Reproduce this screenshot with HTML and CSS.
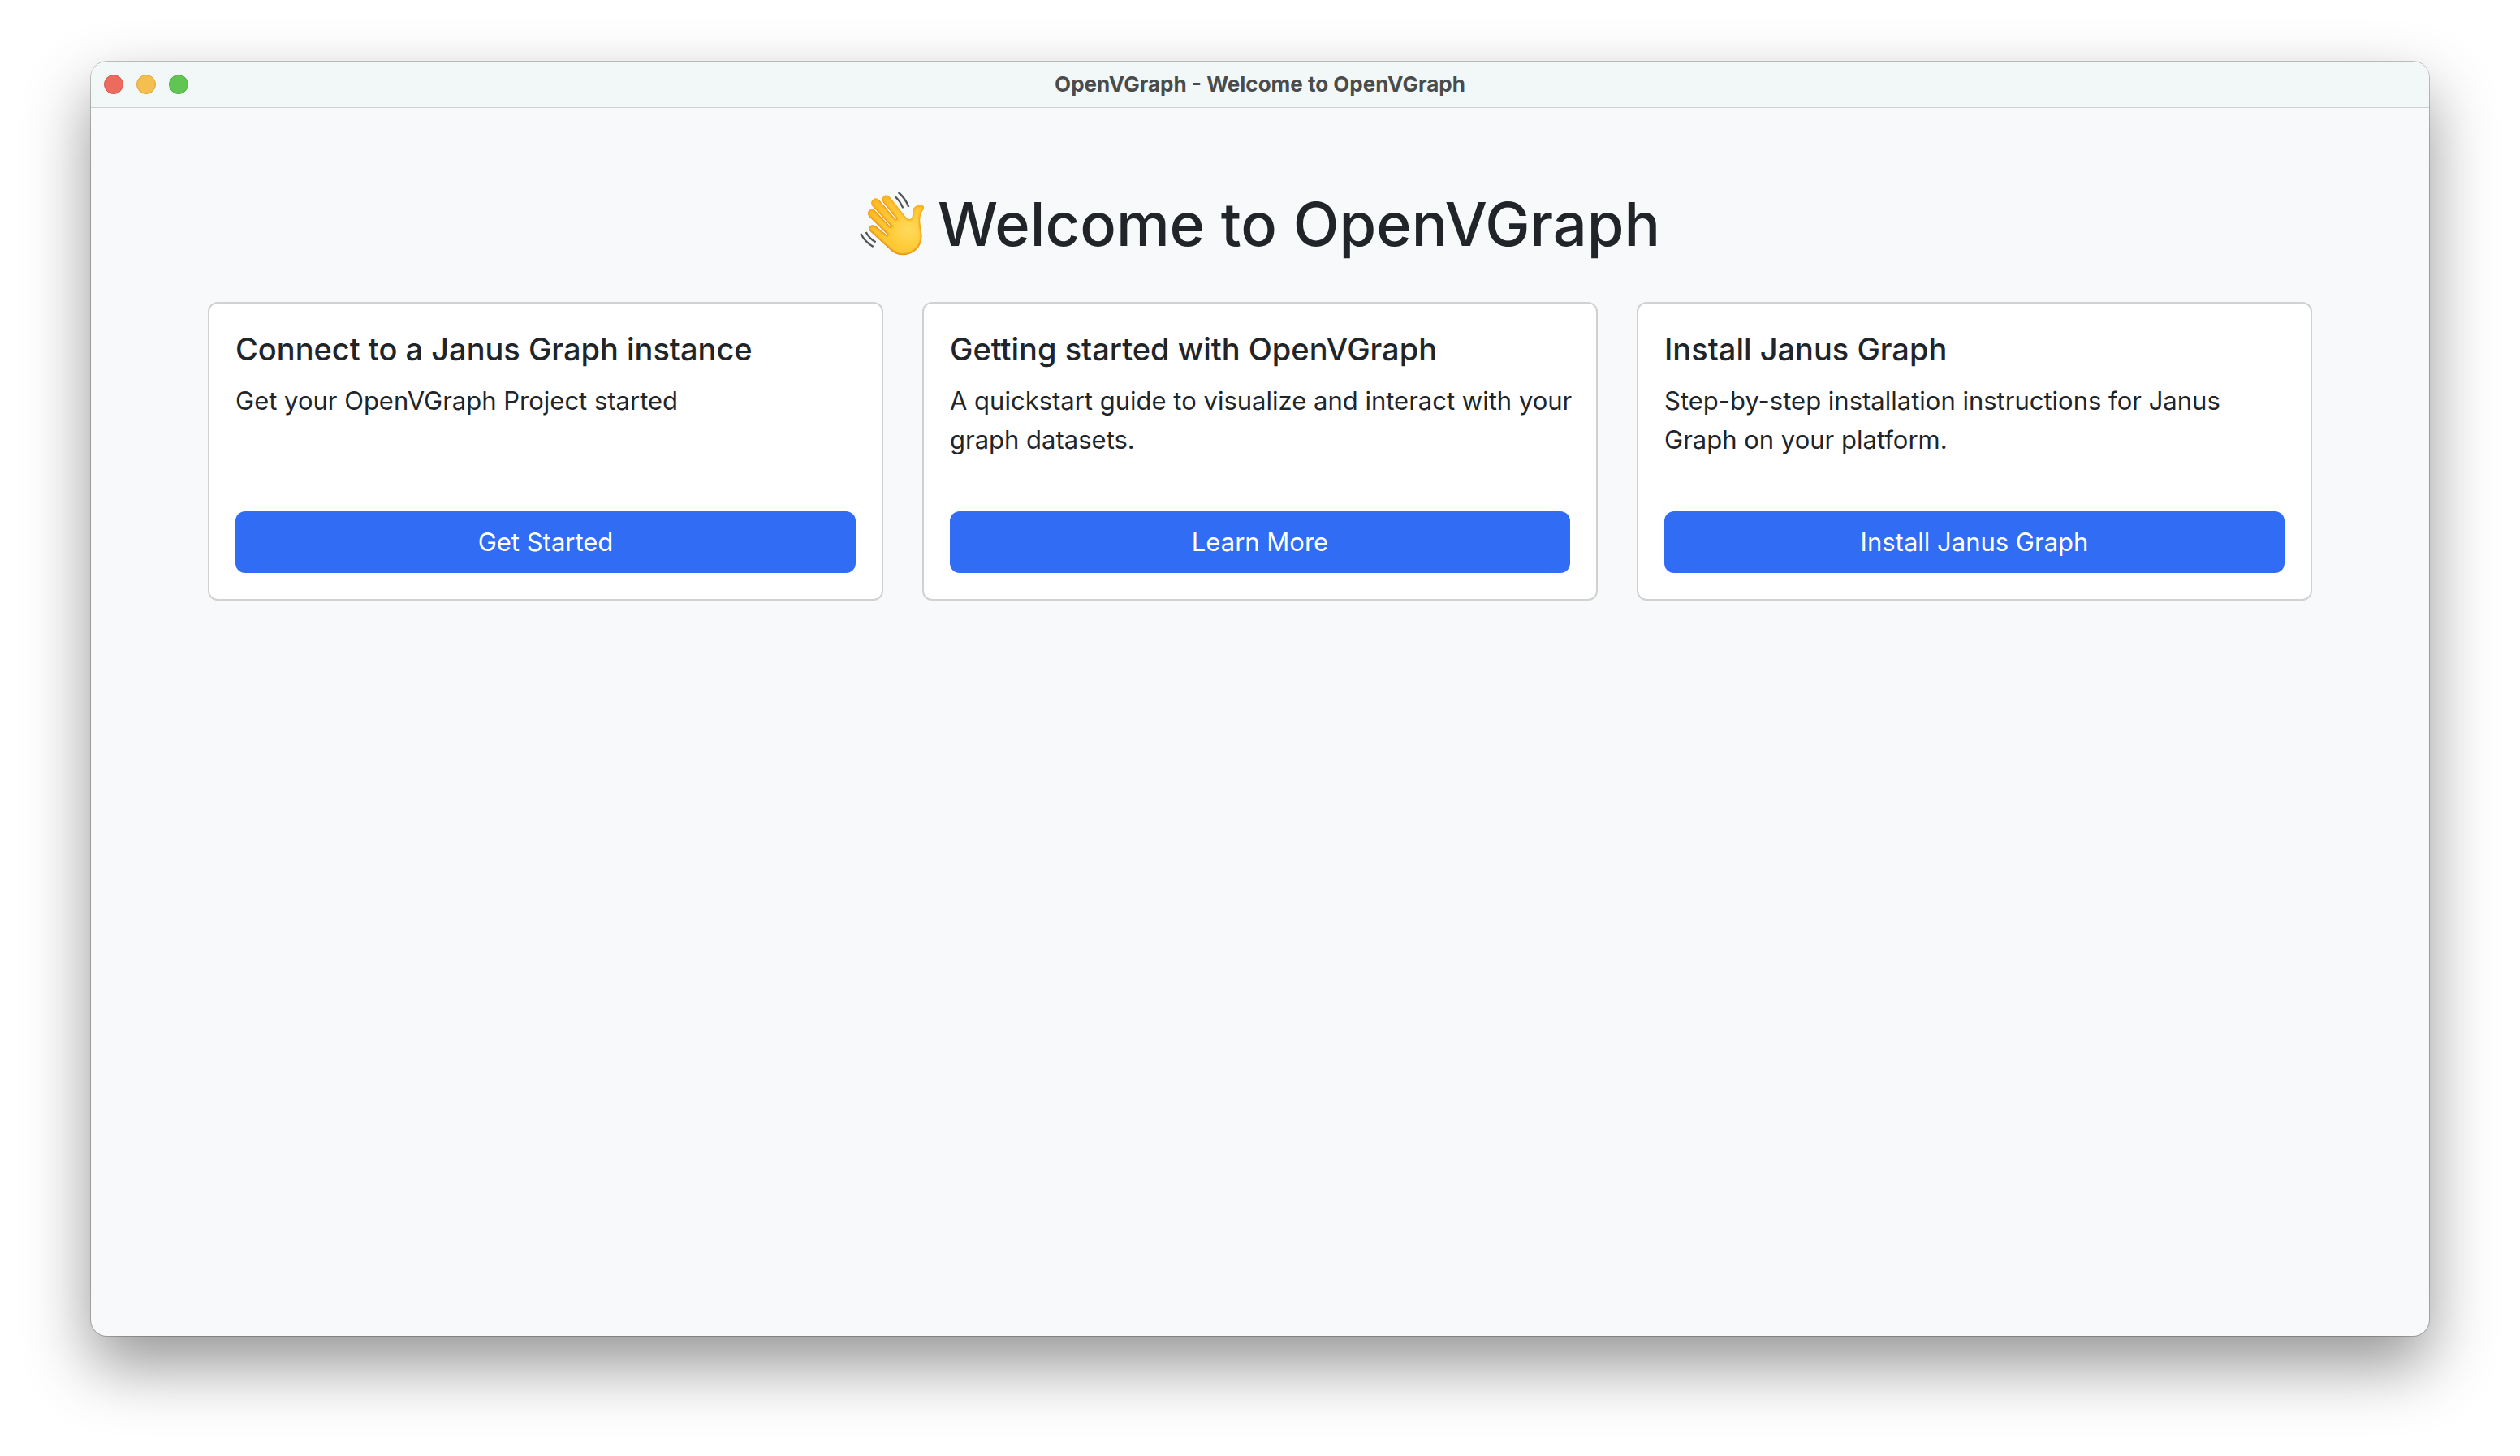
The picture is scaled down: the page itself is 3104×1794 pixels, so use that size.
FILE: index.html
```html
<!DOCTYPE html>
<html lang="en">
<head>
<meta charset="utf-8">
<meta name="viewport" content="width=device-width, initial-scale=1">
<title>OpenVGraph - Welcome to OpenVGraph</title>
<link rel="stylesheet" href="styles.css">
</head>
<body>
<div class="window">
  <header class="titlebar">
    <div class="controls">
      <button class="control control-close" type="button" aria-label="Close"></button>
      <button class="control control-minimize" type="button" aria-label="Minimize"></button>
      <button class="control control-zoom" type="button" aria-label="Zoom"></button>
    </div>
    <div class="titlebar-title">OpenVGraph - Welcome to OpenVGraph</div>
  </header>
  <main class="content">
    <h1 class="heading">
      <svg class="wave" viewBox="84 48 240 240" aria-hidden="true">
        <defs>
          <radialGradient id="skin" gradientUnits="userSpaceOnUse" cx="262" cy="190" r="150">
            <stop offset="0" stop-color="#ffda5e"/>
            <stop offset=".45" stop-color="#ffcb37"/>
            <stop offset="1" stop-color="#fdbb2a"/>
          </radialGradient>
          <linearGradient id="edge" gradientUnits="userSpaceOnUse" x1="240" y1="100" x2="210" y2="285">
            <stop offset="0" stop-color="#f3a71d"/>
            <stop offset="1" stop-color="#d67d0c"/>
          </linearGradient>
          <filter id="soften" x="-10%" y="-10%" width="120%" height="120%"><feGaussianBlur stdDeviation="3"/></filter>
          <clipPath id="hand"><path id="hand-shape" d="M120 193C113 178 128 165 143 176L184 209L186 206L117 138C107 124 123 106 139 118L197 178L201 177L130 100C119 84 139 65 154 78L216 150L220 149L170 86C160 70 181 52 195 68L250 137C258 148 269 156 277 145C281 136 277 122 282 112C288 99 309 94 319 101C324 107 320 114 315 121C302 143 307 168 311 190C316 217 314 237 300 255C285 274 263 283 241 283C222 283 208 274 195 262Z"/></clipPath>
        </defs>
        <use href="#hand-shape" fill="url(#skin)"/>
        <g clip-path="url(#hand)">
          <use href="#hand-shape" fill="none" stroke="url(#edge)" stroke-width="8" filter="url(#soften)"/>
          <path d="M143 176L184 209L186 206L117 138M139 118L197 178L201 177L130 100M154 78L216 150L220 149L170 86" fill="none" stroke="#dc870e" stroke-width="3"/>
        </g>
        <path d="M227 51Q252 72 265 105M215 66Q233 83 244 109M88 204Q104 235 134 252M107 198Q119 222 143 235" fill="none" stroke="#535558" stroke-width="7"/>
      </svg>
      <span>Welcome to OpenVGraph</span>
    </h1>
    <div class="cards">
      <section class="card">
        <h2 class="card-title">Connect to a Janus Graph instance</h2>
        <p class="card-text">Get your OpenVGraph Project started</p>
        <button class="button" type="button">Get Started</button>
      </section>
      <section class="card">
        <h2 class="card-title">Getting started with OpenVGraph</h2>
        <p class="card-text">A quickstart guide to visualize and interact with your graph datasets.</p>
        <button class="button" type="button">Learn More</button>
      </section>
      <section class="card">
        <h2 class="card-title">Install Janus Graph</h2>
        <p class="card-text">Step-by-step installation instructions for Janus Graph on your platform.</p>
        <button class="button" type="button">Install Janus Graph</button>
      </section>
    </div>
  </main>
</div>
</body>
</html>
```
FILE: styles.css
```css
*, *::before, *::after { box-sizing: border-box; }

body {
  margin: 0;
  min-height: 100vh;
  padding: 76px 112px 148px;
  display: flex;
  background: #fff;
  color: #212529;
  font-family: Inter, "Liberation Sans", sans-serif;
}

.window {
  flex: 1;
  min-width: 0;
  border-radius: 20px;
  background: #f8f9fb;
  box-shadow: 0 0 0 1px rgba(0, 0, 0, .22), 0 36px 80px rgba(0, 0, 0, .42);
}

.titlebar {
  height: 57px;
  padding: 0 16px;
  display: grid;
  grid-template-columns: 1fr auto 1fr;
  align-items: center;
  border-bottom: 1px solid #cfd2d2;
  border-radius: 20px 20px 0 0;
  background: #f2f8f8;
}

.controls {
  display: flex;
  gap: 16px;
}

.control {
  width: 24px;
  height: 24px;
  padding: 0;
  border: 1px solid;
  border-radius: 50%;
}

.control-close { background: #ed6a5e; border-color: #d8564b; }
.control-minimize { background: #f5bf4f; border-color: #dba33b; }
.control-zoom { background: #61c554; border-color: #50aa41; }

.titlebar-title {
  font-size: 26px;
  line-height: 32px;
  font-weight: 700;
  color: #4a4c4c;
}

.content {
  max-width: 2640px;
  margin: 0 auto;
  padding: 95px 24px 48px;
}

.heading {
  margin: 0 0 48px;
  display: flex;
  justify-content: center;
  align-items: center;
  gap: 16px;
  font-size: 74px;
  line-height: 96px;
  font-weight: 500;
}

.wave {
  width: 80px;
  height: 80px;
}

.cards {
  display: grid;
  grid-template-columns: repeat(3, 1fr);
  gap: 48px;
}

.card {
  display: flex;
  flex-direction: column;
  padding: 32px;
  border: 2px solid #d0d1d2;
  border-radius: 12px;
  background: #fff;
}

.card-title {
  margin: 0 0 16px;
  font-size: 38px;
  line-height: 48px;
  font-weight: 500;
}

/* Long lines may run slightly into the card's right padding. */
.card-text {
  margin: 0 -8px 64px 0;
  font-size: 31px;
  line-height: 48px;
}

.button {
  width: 100%;
  margin-top: auto;
  padding: 14px 24px;
  border: 0;
  border-radius: 12px;
  background: #316cf4;
  color: #fff;
  font-family: inherit;
  font-size: 31px;
  line-height: 48px;
}
```
